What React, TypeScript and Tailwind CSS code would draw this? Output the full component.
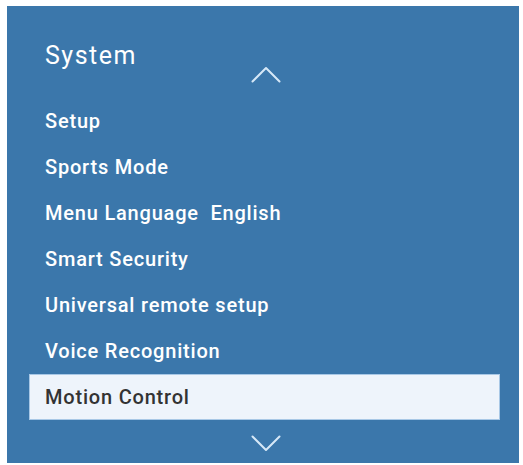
import React from 'react';

const ITEMS = [
  'Setup',
  'Sports Mode',
  'Menu Language  English',
  'Smart Security',
  'Universal remote setup',
  'Voice Recognition',
  'Motion Control',
];

const Chevron = ({ up }: { up?: boolean }) => (
  <svg width="30" height="17" viewBox="0 0 30 17" fill="none">
    <path
      d={up ? 'M1.5 15.5 L15 2 L28.5 15.5' : 'M1.5 1.5 L15 15 L28.5 1.5'}
      stroke="#d6e8f7"
      strokeWidth="2"
      strokeLinecap="round"
      strokeLinejoin="round"
    />
  </svg>
);

export default function App() {
  const selected = 'Motion Control';

  return (
    <div className="w-[523px] h-[465px] bg-white pt-[6px] pl-[7px]" style={{ fontFamily: 'Roboto, "Liberation Sans", Arial, sans-serif' }}>
      <div className="w-[512px] h-[457px] bg-[#3b77ab] flex flex-col pt-[34px]">
        <h1 className="pl-[38px] text-[25px] leading-[32px] tracking-[1.5px] text-white font-normal">System</h1>
        <div className="-mt-[6px] pl-[6px] flex justify-center">
          <Chevron up />
        </div>

        <ul className="mt-[15px] flex flex-col">
          {ITEMS.map((item) => {
            const isSel = item === selected;
            return (
              <li
                key={item}
                className={`ml-[22px] w-[471px] h-[46px] flex items-center text-[20px] tracking-[0.8px] font-medium whitespace-pre ${
                  isSel ? 'bg-[#eef4fb] border border-[#a8c8e6] text-[#333333] pl-[15px]' : 'text-white pl-[16px]'
                }`}
              >
                {item}
              </li>
            );
          })}
        </ul>

        <div className="mt-[15px] pl-[6px] flex justify-center">
          <Chevron />
        </div>
      </div>
    </div>
  );
}
